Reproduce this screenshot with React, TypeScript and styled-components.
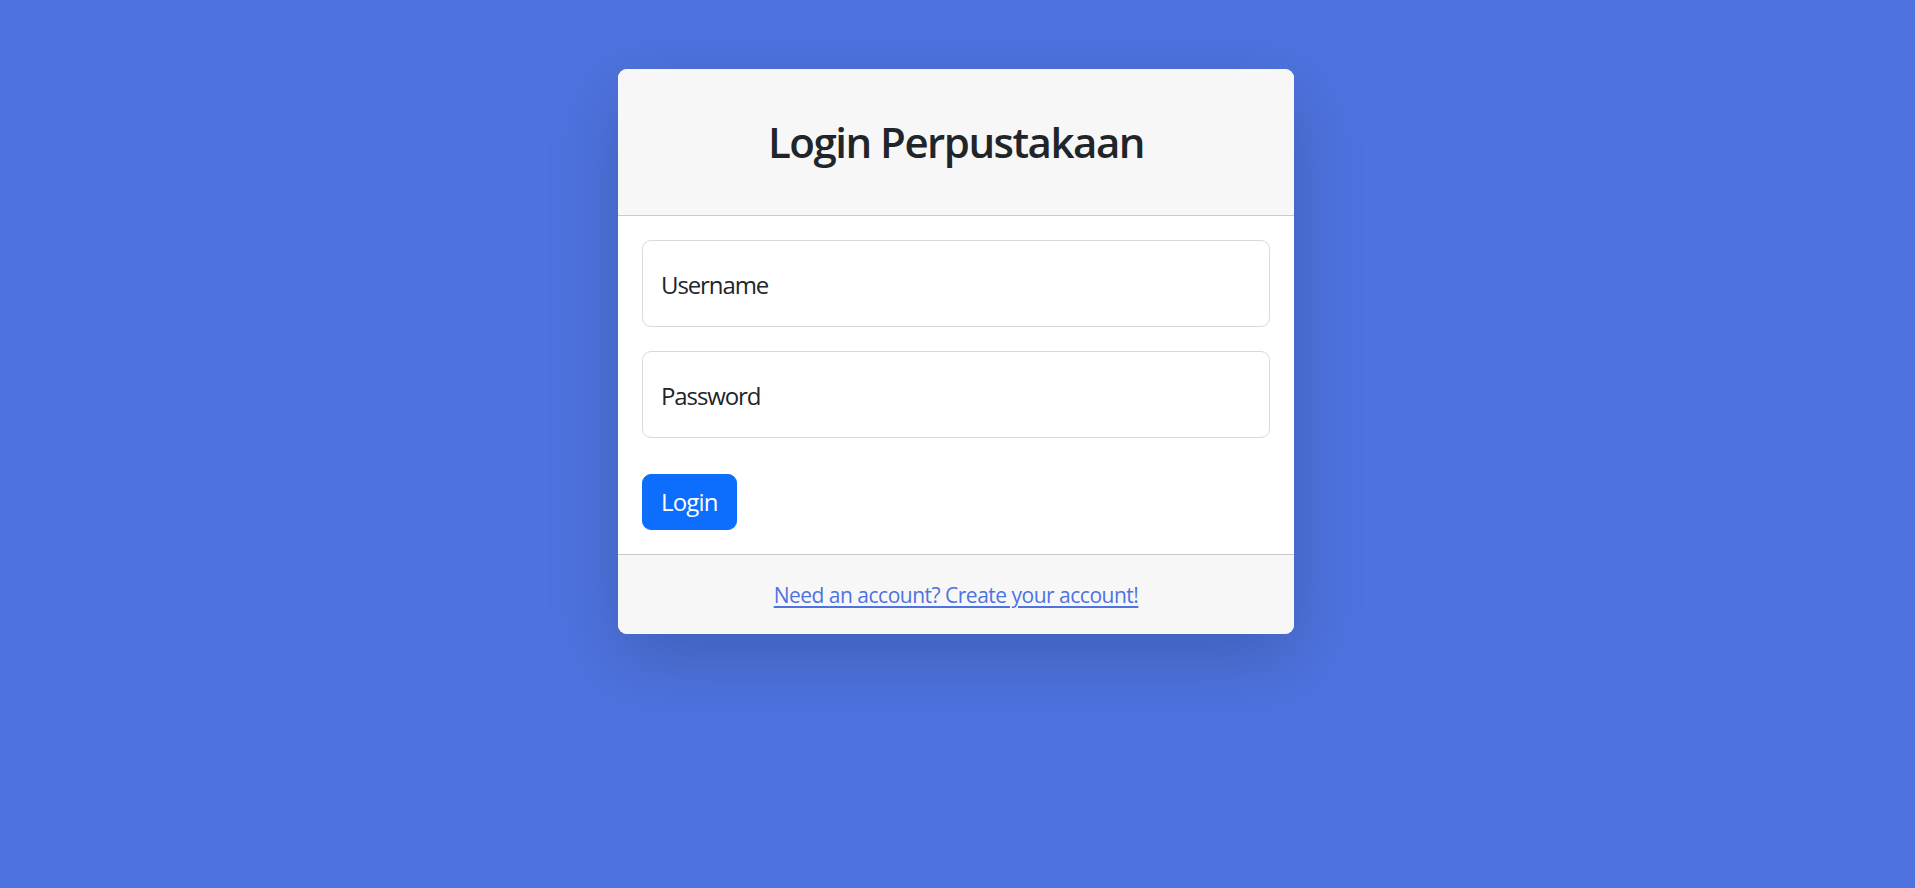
import React from "react";
import styled, { createGlobalStyle } from "styled-components";

const GlobalStyle = createGlobalStyle`
  html, body {
    margin: 0;
    padding: 0;
  }
  body {
    background: #4e73df;
    font-family: "Open Sans", "Noto Sans", sans-serif;
    font-size: 24px;
    line-height: 1.5;
    color: #212529;
    min-height: 888px;
  }
  * { box-sizing: border-box; }
`;

const Page = styled.main`
  display: flex;
  justify-content: center;
  padding: 69px 3px 0 0;
`;

const Card = styled.div`
  width: 676px;
  background: #fff;
  border-radius: 9px;
  box-shadow: 0 24px 72px rgba(0, 0, 0, 0.175);
  overflow: hidden;
  display: flex;
  flex-direction: column;
`;

const CardHeader = styled.div`
  background: #f7f7f7;
  padding: 12px 24px;
  border-bottom: 1.5px solid rgba(0, 0, 0, 0.175);
  display: flex;
  justify-content: center;
`;

const Title = styled.h3`
  margin: 36px 0;
  font-size: 42px;
  font-weight: 600;
  line-height: 50px;
  letter-spacing: -1.5px;
  text-align: center;
`;

const CardBody = styled.form`
  padding: 24px;
  display: flex;
  flex-direction: column;
`;

const Field = styled.div<{ $last?: boolean }>`
  margin-bottom: ${(p) => (p.$last ? "36px" : "24px")};
`;

const Input = styled.div`
  height: 87px;
  border: 1.5px solid #d6d9dd;
  border-radius: 9px;
  background: #fff;
  display: flex;
  align-items: center;
  padding: 2px 18px 0;
  font-size: 24px;
  color: #212529;
  letter-spacing: -1.1px;
`;

const Actions = styled.div`
  display: flex;
  align-items: center;
  justify-content: space-between;
`;

const Button = styled.button`
  height: 56px;
  padding: 0 18px 2px;
  background: #0d6efd;
  border: 1.5px solid #0d6efd;
  border-radius: 9px;
  color: #fff;
  font-family: inherit;
  font-size: 24px;
  letter-spacing: -0.8px;
  cursor: pointer;
`;

const CardFooter = styled.div`
  background: #f7f7f7;
  border-top: 1.5px solid rgba(0, 0, 0, 0.175);
  padding: 24px;
  text-align: center;
  line-height: 30px;
`;

const SmallLink = styled.a`
  font-size: 21px;
  color: #4e73df;
  text-decoration: underline;
  text-underline-offset: 3px;
  letter-spacing: -0.5px;
`;

export default function App() {
  return (
    <>
      <GlobalStyle />
      <Page>
        <Card>
          <CardHeader>
            <Title>Login Perpustakaan</Title>
          </CardHeader>
          <CardBody onSubmit={(e) => e.preventDefault()}>
            <Field>
              <Input>Username</Input>
            </Field>
            <Field $last>
              <Input>Password</Input>
            </Field>
            <Actions>
              <Button type="submit">Login</Button>
            </Actions>
          </CardBody>
          <CardFooter>
            <SmallLink href="#">Need an account? Create your account!</SmallLink>
          </CardFooter>
        </Card>
      </Page>
    </>
  );
}
